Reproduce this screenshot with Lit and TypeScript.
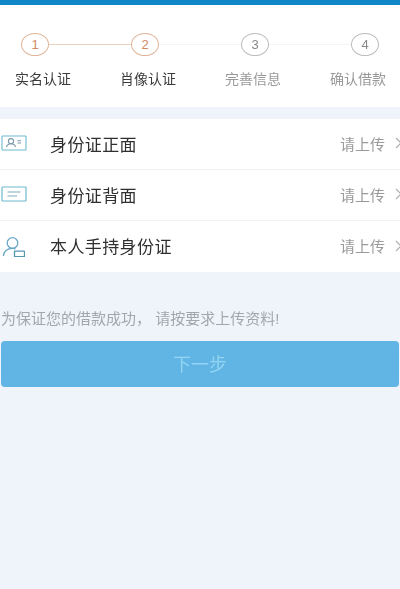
import { LitElement, html, css, svg } from "lit";
import { customElement } from "lit/decorators.js";

const steps = [
  { n: "1", label: "实名认证", done: true },
  { n: "2", label: "肖像认证", done: true },
  { n: "3", label: "完善信息", done: false },
  { n: "4", label: "确认借款", done: false },
];

const front = svg`<svg width="26" height="16" viewBox="0 0 26 16" fill="none" stroke="#6fb9d0" stroke-width="1.100"><rect x="1" y="1" width="24" height="14" rx="0.5"/><circle cx="10" cy="6.2" r="2.6" stroke="#7a97aa"/><path d="M5.500 12c.6-2.400 2.300-3.200 4.500-3.200s3.900.8 4.500 3.200" stroke="#7a97aa"/><path d="M16.500 5.800h3.500M16.500 8h3.500" stroke="#7a97aa"/></svg>`;
const back = svg`<svg width="26" height="16" viewBox="0 0 26 16" fill="none" stroke="#6fb9d0" stroke-width="1.200"><rect x="1" y="1" width="24" height="14" rx="0.5"/><path d="M6.500 6h13M6.500 10h9.500" stroke="#82a9ba"/></svg>`;
const person = svg`<svg width="24" height="22" viewBox="0 0 24 22" fill="none" stroke="#6aa6c6" stroke-width="1.300"><circle cx="11.500" cy="8" r="5.300"/><path d="M2.500 21c0-4.500 3.500-7.700 9-7.700 1.200 0 2.200.2 3 .5"/><rect x="13.500" y="16.200" width="10" height="5.500" rx="0.500" stroke="#5596b0"/></svg>`;

const rows = [
  { icon: front, label: "身份证正面" },
  { icon: back, label: "身份证背面" },
  { icon: person, label: "本人手持身份证" },
];

@customElement("app-root")
export class AppRoot extends LitElement {
  static styles = css`
    :host {
      display: block;
      width: 400px;
      height: 589px;
      background: #eff3fa;
      font-family: "Liberation Sans", "Noto Sans CJK SC", sans-serif;
      overflow: hidden;
    }
    .page { filter: blur(0.4px); height: 100%; }
    .topbar { height: 5px; background: #0f86c6; }
    .steps {
      height: 102px;
      background: #fff;
      box-sizing: border-box;
      padding-top: 28px;
      display: flex;
      flex-direction: column;
      gap: 14px;
      align-items: center;
    }
    .circles { display: grid; grid-template-columns: repeat(4, 110px); }
    .node { position: relative; display: flex; justify-content: center; }
    .line {
      position: absolute;
      top: 11px;
      left: 69px;
      width: 82px;
      height: 1px;
      background: #f4f4f4;
    }
    .line.on { background: #ecd2c0; }
    .circle {
      position: relative;
      box-sizing: border-box;
      width: 28px;
      height: 23px;
      border-radius: 50%;
      border: 1px solid #bdbdbd;
      color: #888;
      background: #fff;
      font-size: 13px;
      display: flex;
      align-items: center;
      justify-content: center;
    }
    .done .circle { border-color: #e0b59a; color: #cf8a64; }
    .labels {
      display: grid;
      grid-template-columns: repeat(4, 105px);
      justify-items: center;
      padding-left: 1px;
    }
    .label { font-size: 14px; line-height: 18px; color: #999; white-space: nowrap; }
    .label.done { color: #3c3c3c; }
    .list { margin-top: 12px; background: #fff; }
    .row {
      height: 51px;
      display: flex;
      align-items: center;
      box-sizing: border-box;
      padding: 0 0 2px 1px;
      border-bottom: 1px solid #f3f3f3;
    }
    .row:last-child { border-bottom: none; }
    .icon { width: 49px; display: flex; align-items: center; }
    .name { flex: 1; font-size: 17px; letter-spacing: 0.400px; color: #2f2f2f; }
    .status { font-size: 15px; color: #9a9a9a; }
    .chev { margin: 0 -2px 0 10px; display: block; }
    .hint {
      margin: 38px 0 0 1px;
      font-size: 15px;
      line-height: 18px;
      color: #a3a7ad;
      white-space: nowrap;
    }
    .btn {
      margin: 13px 1px 0 1px;
      height: 46px;
      box-sizing: border-box;
      padding-bottom: 3px;
      border-radius: 4px;
      background: #60b5e4;
      color: #93d5f2;
      font-size: 18px;
      display: flex;
      align-items: center;
      justify-content: center;
    }
  `;

  render() {
    return html`
      <div class="page">
        <div class="topbar"></div>
        <div class="steps">
          <div class="circles">
            ${steps.map((s, i) => html`
              <div class="node ${s.done ? "done" : ""}">
                ${i < 3 ? html`<div class="line ${i === 0 ? "on" : ""}"></div>` : ""}
                <div class="circle">${s.n}</div>
              </div>`)}
          </div>
          <div class="labels">
            ${steps.map((s) => html`<div class="label ${s.done ? "done" : ""}">${s.label}</div>`)}
          </div>
        </div>
        <div class="list">
          ${rows.map((r) => html`
            <div class="row">
              <div class="icon">${r.icon}</div>
              <div class="name">${r.label}</div>
              <div class="status">请上传</div>
              <svg class="chev" width="7" height="12" viewBox="0 0 7 12" fill="none" stroke="#b0b0b0" stroke-width="1.200"><path d="M1 1l5 5-5 5"/></svg>
            </div>`)}
        </div>
        <div class="hint">为保证您的借款成功， 请按要求上传资料!</div>
        <div class="btn">下一步</div>
      </div>
    `;
  }
}
